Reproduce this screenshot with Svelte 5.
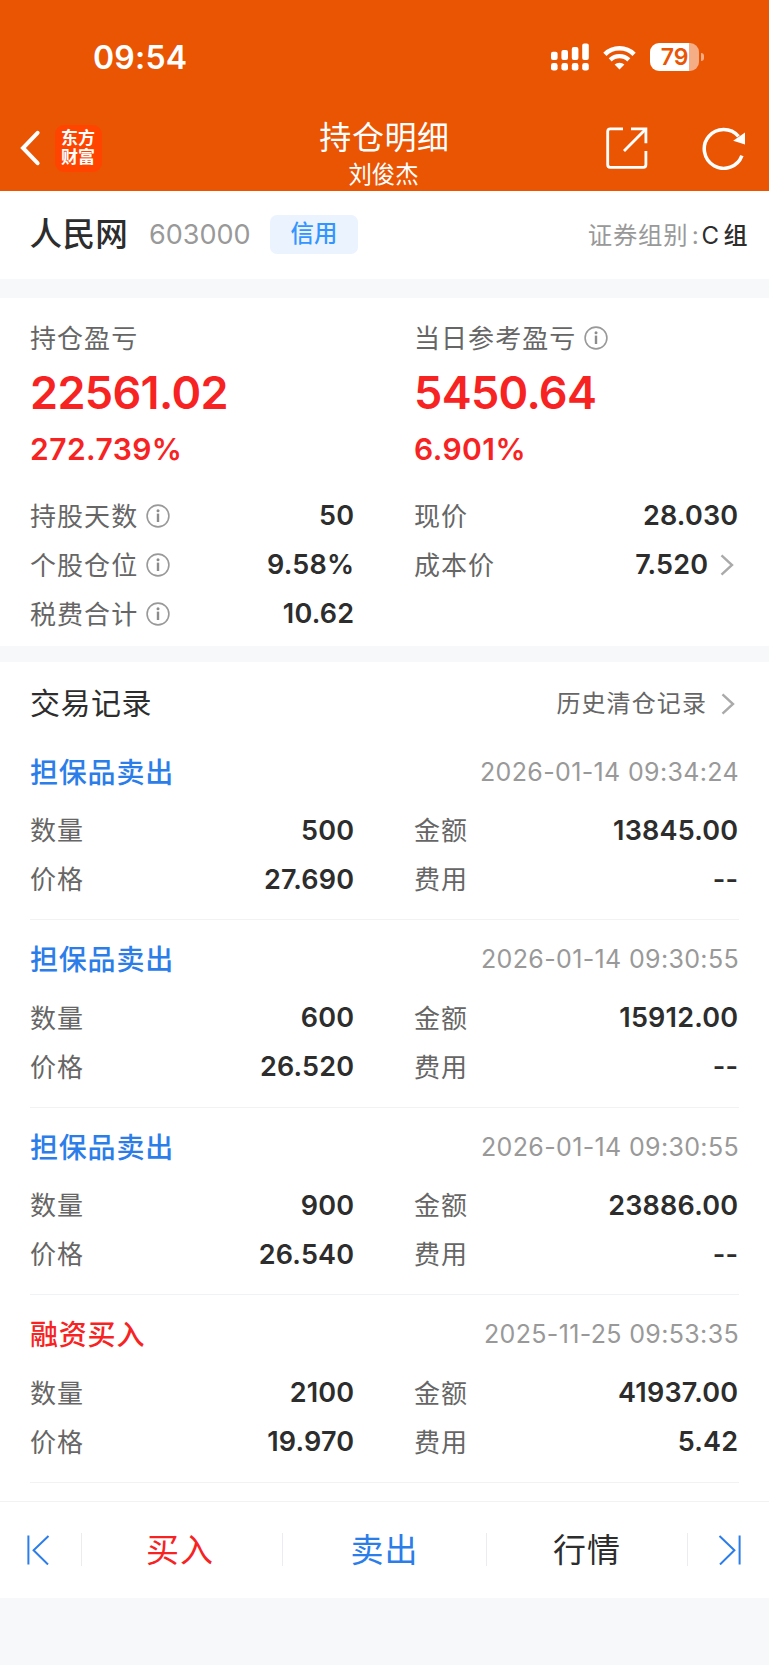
<script>
  const left = [
    { label: '持股天数', value: '50', info: true },
    { label: '个股仓位', value: '9.58%', info: true },
    { label: '税费合计', value: '10.62', info: true }
  ];
  const right = [
    { label: '现价', value: '28.030' },
    { label: '成本价', value: '7.520', more: true }
  ];
  const records = [
    { type: '担保品卖出', side: 'sell', time: '2026-01-14 09:34:24', qty: '500', amount: '13845.00', price: '27.690', fee: '--' },
    { type: '担保品卖出', side: 'sell', time: '2026-01-14 09:30:55', qty: '600', amount: '15912.00', price: '26.520', fee: '--' },
    { type: '担保品卖出', side: 'sell', time: '2026-01-14 09:30:55', qty: '900', amount: '23886.00', price: '26.540', fee: '--' },
    { type: '融资买入', side: 'buy', time: '2025-11-25 09:53:35', qty: '2100', amount: '41937.00', price: '19.970', fee: '5.42' }
  ];
</script>

{#snippet infoIcon()}
  <svg class="info" width="24" height="24" viewBox="0 0 24 24" fill="none">
    <circle cx="12" cy="12" r="10.9" stroke="#999" stroke-width="1.6" />
    <circle cx="12" cy="6.8" r="1.5" fill="#8c8c8c" />
    <path d="M12 9.6V18" stroke="#8c8c8c" stroke-width="2.4" />
  </svg>
{/snippet}

{#snippet chevron()}
  <svg class="chev" width="14" height="22" viewBox="0 0 14 22" fill="none">
    <path d="M1.5 1.3L12 11L1.5 20.7" stroke="#aaa" stroke-width="2.4" />
  </svg>
{/snippet}

{#snippet row(item)}
  <div class="row">
    <span class="label">{item.label}</span>
    {#if item.info}{@render infoIcon()}{/if}
    <span class="value">{item.value}</span>
    {#if item.more}{@render chevron()}{/if}
  </div>
{/snippet}

<div class="page">
  <header>
    <div class="status">
      <span class="clock">09:54</span>
      <svg class="signal" width="38" height="28" viewBox="0 0 38 28" fill="#fff">
        <rect x="0" y="8.8" width="6.6" height="8.2" rx="2" />
        <rect x="10.4" y="7" width="6.6" height="10" rx="2" />
        <rect x="20.8" y="4" width="6.6" height="13" rx="2" />
        <rect x="31.2" y="0.6" width="6.6" height="16.4" rx="2" />
        <rect x="0" y="20" width="6.6" height="7.6" rx="2.4" />
        <rect x="10.4" y="20" width="6.6" height="7.6" rx="2.4" />
        <rect x="20.8" y="20" width="6.6" height="7.6" rx="2.4" />
        <rect x="31.2" y="20" width="6.6" height="7.6" rx="2.4" />
      </svg>
      <svg class="wifi" width="33" height="25" viewBox="0 0 33 25" fill="none">
        <path d="M1.9 9.3A20.8 20.8 0 0 1 31.1 9.3" stroke="#fff" stroke-width="4.6" />
        <path d="M7.2 14.9A13.2 13.2 0 0 1 25.8 14.9" stroke="#fff" stroke-width="4.3" />
        <path d="M16.5 24.6L11.6 19.6A7.2 7.2 0 0 1 21.4 19.6Z" fill="#fff" />
      </svg>
      <div class="battery"><span>79</span></div>
      <i class="nub"></i>
    </div>
    <nav>
      <div class="nav-left">
        <svg width="22" height="38" viewBox="0 0 22 38" fill="none">
          <path d="M18.6 3.8L4 19L18.6 34.2" stroke="#fff" stroke-width="4" stroke-linecap="round" stroke-linejoin="miter" />
        </svg>
        <div class="logo"><span>东方</span><span>财富</span></div>
      </div>
      <div class="nav-title">
        <h1>持仓明细</h1>
        <p>刘俊杰</p>
      </div>
      <div class="nav-right">
        <svg width="42" height="42" viewBox="0 0 42 42" fill="none" stroke="#fff" stroke-width="2.8">
          <path d="M17 1.9H4.2Q1.7 1.9 1.7 4.4V37.8Q1.7 40.3 4.2 40.3H37.4Q39.9 40.3 39.9 37.8V24" />
          <path d="M25 1.9H39.9V16.2" />
          <path d="M39.6 2.2L18 24" />
        </svg>
        <svg width="44" height="44" viewBox="0 0 44 44" fill="none">
          <path d="M39.9 29.6A19.4 19.4 0 1 1 36.5 10.4" stroke="#fff" stroke-width="3.5" />
          <path d="M43 6.4V18.6L31.2 14.8Z" fill="#fff" />
        </svg>
      </div>
    </nav>
  </header>

  <section class="stock">
    <span class="name">人民网</span>
    <span class="code">603000</span>
    <span class="badge">信用</span>
    <span class="group">证券组别<span class="colon">:</span></span>
    <span class="cgroup">C<span>组</span></span>
  </section>

  <section class="summary">
    <div class="col">
      <div class="caption"><span class="label">持仓盈亏</span></div>
      <div class="big">22561.02</div>
      <div class="pct">272.739%</div>
      {#each left as item}{@render row(item)}{/each}
    </div>
    <div class="col">
      <div class="caption"><span class="label">当日参考盈亏</span>{@render infoIcon()}</div>
      <div class="big">5450.64</div>
      <div class="pct">6.901%</div>
      {#each right as item}{@render row(item)}{/each}
    </div>
  </section>

  <section class="trades">
    <div class="trades-head">
      <h2>交易记录</h2>
      <span class="history">历史清仓记录</span>
      {@render chevron()}
    </div>
    {#each records as r}
      <article>
        <div class="rec-head">
          <span class="type {r.side}">{r.type}</span>
          <time>{r.time}</time>
        </div>
        <div class="grid">
          {@render row({ label: '数量', value: r.qty })}
          {@render row({ label: '金额', value: r.amount })}
          {@render row({ label: '价格', value: r.price })}
          {@render row({ label: '费用', value: r.fee })}
        </div>
      </article>
    {/each}
  </section>

  <footer>
    <div class="edge">
      <svg width="24" height="30" viewBox="0 0 24 30" fill="none" stroke="#2b7de9" stroke-width="2">
        <path d="M2.4 0.5V29.5M22.5 1L7.6 15.3L22 29.5" />
      </svg>
    </div>
    <div class="tab buy">买入</div>
    <div class="tab sell">卖出</div>
    <div class="tab">行情</div>
    <div class="edge">
      <svg width="24" height="30" viewBox="0 0 24 30" fill="none" stroke="#2b7de9" stroke-width="2">
        <path d="M21.6 0.5V29.5M1.5 1L16.4 15.3L2 29.5" />
      </svg>
    </div>
  </footer>
</div>

<style>
  :global(body) {
    margin: 0;
    background: #f6f8fa;
  }
  .page {
    width: 769px;
    height: 1665px;
    overflow: hidden;
    background: #f6f8fa;
    color: #2d2d2d;
    font-family: Inter, "Noto Sans CJK SC", sans-serif;
  }
  h1, h2, p {
    margin: 0;
    font-weight: 400;
  }
  svg {
    display: block;
    flex: none;
  }
  header {
    height: 191px;
    background: #ea5504;
    color: #fff;
  }
  .status {
    display: flex;
    align-items: center;
    height: 114px;
    padding-left: 93px;
  }
  .clock {
    width: 458px;
    font-size: 32px;
    font-weight: 600;
    letter-spacing: 0.2px;
  }
  .wifi {
    margin-left: 14px;
  }
  .battery {
    width: 49px;
    height: 28px;
    margin-left: 14px;
    border-radius: 9px;
    background: linear-gradient(90deg, #fff 39px, #f5ad85 39px);
    color: #ea5504;
    font-size: 23px;
    font-weight: 600;
    line-height: 28px;
    text-align: center;
  }
  .nub {
    width: 3px;
    height: 8px;
    margin-left: 1.5px;
    border-radius: 0 4px 4px 0;
    background: #f5ad85;
  }
  nav {
    display: grid;
    grid-template-columns: 1fr 200px 1fr;
    height: 77px;
  }
  .nav-left {
    display: flex;
    align-items: center;
    height: 68px;
    padding-left: 19px;
  }
  .logo {
    display: flex;
    flex-direction: column;
    align-items: center;
    justify-content: center;
    width: 47px;
    height: 47px;
    margin-left: 13.5px;
    border-radius: 9px;
    background: #ff4400;
    font-size: 17px;
    font-weight: 700;
    line-height: 19.5px;
  }
  .nav-title {
    padding-top: 1px;
    text-align: center;
  }
  h1 {
    font-size: 32px;
    line-height: 46px;
    letter-spacing: 0.6px;
  }
  .nav-title p {
    margin-left: -2px;
    font-size: 23.4px;
    line-height: 27px;
  }
  .nav-right {
    display: flex;
    align-items: center;
    justify-content: flex-end;
    gap: 54.5px;
    height: 68px;
    padding-right: 23px;
  }
  .stock {
    display: flex;
    align-items: center;
    height: 87.5px;
    padding: 0 21.5px 0 29.5px;
    background: #fff;
  }
  .name {
    width: 119.5px;
    padding-bottom: 6px;
    font-size: 32.6px;
    font-weight: 500;
    letter-spacing: 0.3px;
  }
  .code {
    width: 121px;
    color: #999;
    font-size: 27px;
  }
  .badge {
    width: 88px;
    height: 39px;
    border-radius: 7px;
    background: #ebf3ff;
    color: #3395ff;
    font-size: 23.4px;
    font-weight: 500;
    line-height: 38px;
    text-align: center;
  }
  .group {
    margin-left: auto;
    padding-bottom: 3px;
    color: #999;
    font-size: 24.4px;
    letter-spacing: 0.7px;
  }
  .colon {
    margin: 0 2px 0 3.5px;
  }
  .cgroup {
    padding-bottom: 3px;
    font-size: 24px;
  }
  .cgroup span {
    margin-left: 4.5px;
    font-weight: 500;
  }
  .summary {
    display: grid;
    grid-template-columns: 324px 324px;
    column-gap: 60px;
    height: 348px;
    box-sizing: border-box;
    margin-top: 19.5px;
    padding: 20px 0 0 30px;
    background: #fff;
  }
  .caption {
    display: flex;
    align-items: center;
    height: 40px;
  }
  .label {
    padding-bottom: 3px;
    color: #666;
    font-size: 26px;
    letter-spacing: 1.05px;
  }
  .info {
    margin-left: 8px;
  }
  .big {
    height: 68px;
    color: #f72323;
    font-size: 45px;
    font-weight: 600;
    line-height: 69px;
    letter-spacing: -0.65px;
  }
  .pct {
    height: 65px;
    color: #f72323;
    font-size: 30px;
    font-weight: 600;
    line-height: 46px;
    letter-spacing: 0.45px;
  }
  .row {
    display: flex;
    align-items: center;
    height: 49px;
  }
  .value {
    margin-left: auto;
    margin-right: -0.3px;
    font-size: 27px;
    font-weight: 600;
    letter-spacing: 0.2px;
  }
  .chev {
    margin: 0 4.5px 0 11.5px;
  }
  .trades {
    box-sizing: border-box;
    height: 839px;
    margin-top: 15.5px;
    padding: 0 30px;
    background: #fff;
  }
  .trades-head {
    display: flex;
    align-items: center;
    box-sizing: border-box;
    height: 71px;
    padding-top: 13px;
  }
  h2 {
    padding-bottom: 6px;
    font-size: 30px;
    letter-spacing: 0.5px;
  }
  .history {
    margin-left: auto;
    margin-right: 2px;
    padding-bottom: 4px;
    color: #666;
    font-size: 24px;
    letter-spacing: 1.1px;
  }
  article {
    box-sizing: border-box;
    height: 187.67px;
    padding-top: 19px;
    border-bottom: 1px solid #f1f2f4;
  }
  .rec-head {
    display: flex;
    align-items: center;
    justify-content: space-between;
    height: 40px;
    margin-bottom: 14px;
  }
  .type {
    padding-bottom: 2px;
    font-size: 28px;
    font-weight: 500;
    letter-spacing: 0.8px;
  }
  .sell {
    color: #2b7de9;
  }
  .buy {
    color: #f72323;
  }
  time {
    color: #999;
    font-size: 25px;
    letter-spacing: 0.35px;
  }
  .grid {
    display: grid;
    grid-template-columns: 324px 324px;
    column-gap: 60px;
  }
  footer {
    display: grid;
    grid-template-columns: 81px 201px 204px 201px 82px;
    align-items: center;
    box-sizing: border-box;
    height: 97.5px;
    border-top: 1px solid #f1f2f4;
    background: #fff;
  }
  .edge {
    display: flex;
    padding-left: 25.5px;
  }
  .tab {
    height: 33px;
    border-left: 1px solid #ececee;
    font-size: 33px;
    line-height: 35px;
    text-align: center;
    letter-spacing: 1px;
  }
  .tab.buy {
    box-sizing: border-box;
    padding-right: 4px;
  }
  .edge:last-child {
    height: 33px;
    align-items: center;
    border-left: 1px solid #ececee;
    padding-left: 29.5px;
  }
</style>
